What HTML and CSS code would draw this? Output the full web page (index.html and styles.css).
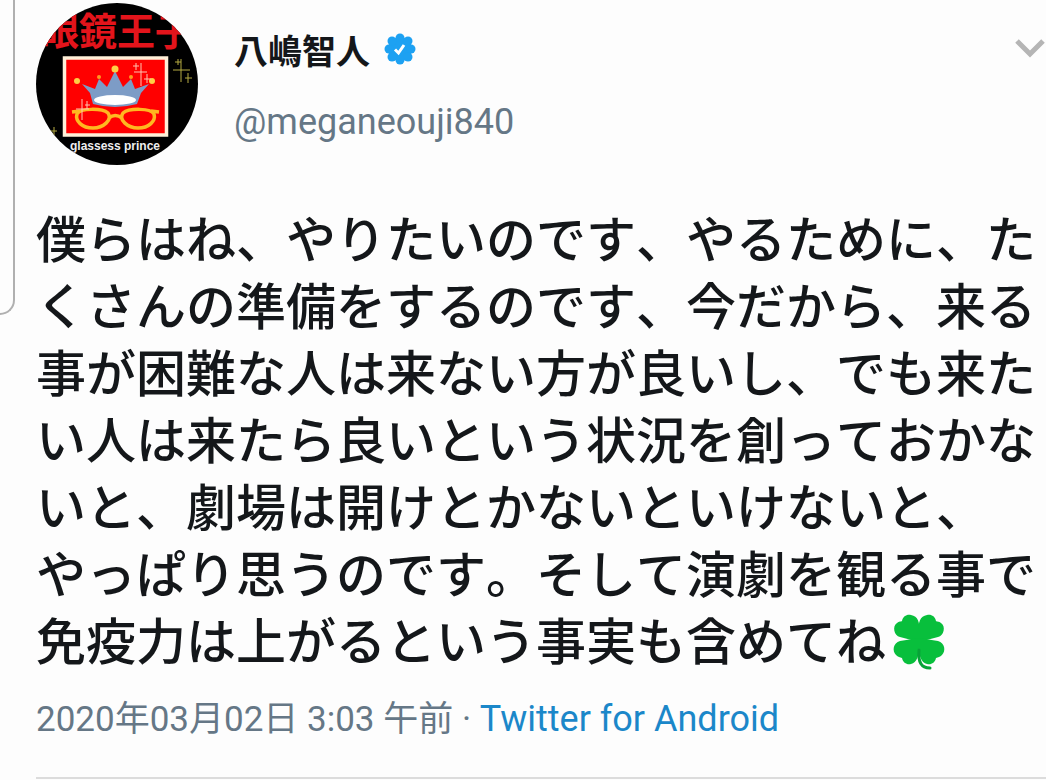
FILE: index.html
```html
<!DOCTYPE html>
<html lang="ja">
<head>
    <meta charset="UTF-8">
    <meta name="viewport" content="width=device-width, initial-scale=1.0">
    <title>八嶋智人</title>
    <link rel="stylesheet" href="styles.css">
</head>
<body>
    <div class="page">
        <!-- 左側のカードの端 -->
        <div class="side-card"></div>

        <article class="tweet">
            <header class="tweet-header">
                <svg class="avatar" viewBox="0 0 162 162" role="img" aria-label="眼鏡王子">
                    <defs>
                        <clipPath id="avatar-clip"><circle cx="81" cy="81" r="81"/></clipPath>
                    </defs>
                    <g clip-path="url(#avatar-clip)">
                        <rect width="162" height="162" fill="#000"/>
                        <text class="avatar-title" x="5" y="42">眼鏡王子</text>
                        <rect x="28.500" y="55" width="102" height="77" fill="#f00" stroke="#fff0d8" stroke-width="3.500"/>
                        <!-- 王冠 -->
                        <path d="M57 101 L54 90 L46 81 L59 86 L63 76 L71 84 L79 68 L87 84 L95 76 L99 86 L113 81 L105 90 L101 101 Q79 107 57 101 Z" fill="#7d9cc6"/>
                        <ellipse cx="79" cy="97" rx="21" ry="5" fill="#fff"/>
                        <g fill="#ffcf45">
                            <circle cx="41" cy="78" r="3"/>
                            <circle cx="79" cy="66" r="3.500"/>
                            <circle cx="116" cy="78" r="3"/>
                            <circle cx="63" cy="74" r="2" fill="#ff9a20"/>
                            <circle cx="95" cy="74" r="2" fill="#ff9a20"/>
                        </g>
                        <!-- 眼鏡 -->
                        <g fill="none" stroke="#ffb820" stroke-width="3.500" stroke-linejoin="round">
                            <path d="M41 111 C44 105 66 105 72 110 C77 117 67 125 57 125 C46 125 39 118 41 111 Z"/>
                            <path d="M118 111 C115 105 93 105 87 110 C82 117 92 125 102 125 C113 125 120 118 118 111 Z"/>
                            <path d="M73 115 Q79 110 86 115M36 109 L44 108M123 109 L115 108"/>
                        </g>
                        <!-- キラキラ -->
                        <g fill="none" stroke="#ffc4b0" stroke-width="1">
                            <path d="M98 69H111M105 60V83M97 63H103M100 60V67M108 76H115M111 71V80"/>
                            <path d="M40 106H53M46 96V117M49 102H54M51 98V106"/>
                        </g>
                        <path d="M137 67H154M145 56V79M139 59H145M142 56V62M149 75H156M152 70V80M14 128H21M18 124V132" fill="none" stroke="#b5ab43" stroke-width="1"/>
                        <text class="avatar-caption" x="79" y="147">glassess prince</text>
                    </g>
                </svg>

                <div class="user">
                    <div class="name-row">
                        <span class="name">八嶋智人</span>
                        <svg class="verified" viewBox="0 0 32 32" role="img" aria-label="認証済み">
                            <g fill="#1da1f2">
                                <circle cx="16" cy="16" r="12"/>
                                <circle cx="16" cy="5" r="4.500"/>
                                <circle cx="24" cy="8" r="4.500"/>
                                <circle cx="27" cy="16" r="4.500"/>
                                <circle cx="24" cy="24" r="4.500"/>
                                <circle cx="16" cy="27" r="4.500"/>
                                <circle cx="8" cy="24" r="4.500"/>
                                <circle cx="5" cy="16" r="4.500"/>
                                <circle cx="8" cy="8" r="4.500"/>
                            </g>
                            <path d="M11 16.500 L14.500 20 L20 12" fill="none" stroke="#fff" stroke-width="3"/>
                        </svg>
                    </div>
                    <div class="handle">@meganeouji840</div>
                </div>

                <button class="menu-btn" type="button" aria-label="メニュー">
                    <svg width="32" height="20" viewBox="0 0 32 20">
                        <path d="M3 3 L16 16 L29 3" fill="none" stroke="#b5b5b5" stroke-width="5"/>
                    </svg>
                </button>
            </header>

            <p class="tweet-text">僕らはね、やりたいのです、やるために、たくさんの準備をするのです、今だから、来る事が困難な人は来ない方が良いし、でも来たい人は来たら良いという状況を創っておかないと、劇場は開けとかないといけないと、やっぱり思うのです。そして演劇を観る事で免疫力は上がるという事実も含めてね<svg class="clover" viewBox="0 0 54 60" role="img" aria-label="四つ葉のクローバー"><g fill="#08bf3c"><path d="M27 30 L8 25 C2 24 0 14 5 11 C7 9 9 10 10 9 C11 4 15 2 19 3 C26 4 28 11 27 18 Z"/><path d="M27 30 L46 25 C52 24 54 14 49 11 C47 9 45 10 44 9 C43 4 39 2 35 3 C28 4 26 11 27 18 Z"/><path d="M27 26 L8 29 C1 31 0 39 4 43 C6 45 8 45 10 46 C11 51 15 53 19 52 C25 51 27 43 27 36 Z"/><path d="M27 26 L46 29 C53 31 54 39 50 43 C48 45 46 45 44 46 C43 51 39 53 35 52 C29 51 27 43 27 36 Z"/></g><path d="M27 38 C26 50 29 56 38 56" fill="none" stroke="#08a338" stroke-width="3" stroke-linecap="round"/></svg></p>

            <footer class="tweet-meta">
                <time datetime="2020-03-02T03:03">2020年03月02日 3:03 午前</time> · <a href="#">Twitter for Android</a>
            </footer>
        </article>
    </div>
</body>
</html>
```
FILE: styles.css
```css
* {
    margin: 0;
    padding: 0;
    box-sizing: border-box;
}

body {
    background-color: #fdfdfd;
    color: #14171a;
    font-family: Roboto, "Noto Sans CJK JP", sans-serif;
}

.page {
    display: flex;
    align-items: flex-start;
    gap: 21px;
}

.side-card {
    flex: none;
    width: 15px;
    height: 315px;
    border-right: 2px solid #b0b0b0;
    border-bottom: 2px solid #b0b0b0;
    border-bottom-right-radius: 15px;
}

.tweet {
    flex: 1;
    min-width: 0;
    padding-top: 3px;
}

.tweet-header {
    display: flex;
    align-items: flex-start;
    gap: 36px;
}

.avatar {
    flex: none;
    width: 162px;
    height: 162px;
}

.avatar-title {
    font-family: "Noto Sans CJK JP", sans-serif;
    font-size: 38px;
    font-weight: 700;
    fill: #e3141b;
}

.avatar-caption {
    font-family: "Liberation Sans", sans-serif;
    font-size: 12px;
    font-weight: 700;
    text-anchor: middle;
    fill: #eee;
}

.user {
    flex: 1;
    padding-top: 21px;
}

.name-row {
    display: flex;
    align-items: center;
    gap: 14px;
    height: 50px;
}

.name {
    font-size: 34px;
    font-weight: 700;
}

.verified {
    width: 32px;
    height: 32px;
}

.handle {
    margin-top: 23px;
    font-size: 36px;
    line-height: 50px;
    color: #657786;
}

.menu-btn {
    display: flex;
    margin-top: 35px;
    border: none;
    background: none;
    cursor: pointer;
}

.tweet-text {
    margin-top: 38px;
    font-family: "Noto Sans CJK JP", sans-serif;
    font-size: 50px;
    font-weight: 500;
    font-kerning: none;
    line-height: 67px;
    line-break: strict;
}

.clover {
    width: 54px;
    height: 60px;
    margin-left: 6px;
    vertical-align: -12px;
}

.tweet-meta {
    margin-top: 22px;
    padding-bottom: 32px;
    border-bottom: 2px solid #dcdcdc;
    font-size: 35px;
    line-height: 50px;
    color: #657786;
}

.tweet-meta a {
    font-size: 36px;
    color: #1b87c9;
    text-decoration: none;
}
```
